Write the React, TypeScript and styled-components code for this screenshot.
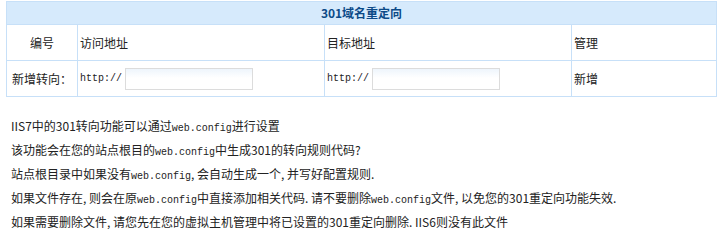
import React from 'react';
import styled, { createGlobalStyle } from 'styled-components';

const GlobalStyle = createGlobalStyle`
  html, body {
    margin: 0;
    padding: 0;
    background: #ffffff;
  }
  body {
    font-family: "Noto Sans CJK SC", "Noto Sans", sans-serif;
    font-size: 12px;
    color: #222222;
  }
`;

const Page = styled.div`
  width: 724px;
  height: 244px;
  padding-top: 1px;
  box-sizing: border-box;
`;

const RedirectTable = styled.table`
  margin-left: 6px;
  width: 710px;
  border-collapse: collapse;
  table-layout: fixed;
  border: 1px solid #c7e0f8;
`;

const TitleCell = styled.th`
  height: 22px;
  padding: 0;
  background: #d6eafc;
  border: 1px solid #c7e0f8;
  color: #0c4a88;
  font-size: 12px;
  font-weight: bold;
  text-align: center;
  line-height: 22px;
`;

const Cell = styled.td<{ $center?: boolean }>`
  height: 35px;
  padding: 0 0 0 ${(p) => (p.$center ? 0 : 2)}px;
  border: 1px solid #c7e0f8;
  text-align: ${(p) => (p.$center ? 'center' : 'left')};
  vertical-align: middle;
  font-size: 12px;
  line-height: 16px;
  color: #222222;
  white-space: nowrap;
`;

const Mono = styled.span`
  font-family: "Liberation Mono", "DejaVu Sans Mono", monospace;
  font-size: 10px;
  color: #222222;
`;

const UrlField = styled.div`
  display: flex;
  align-items: center;
  gap: 3px;
`;

const UrlInput = styled.input`
  width: 128px;
  height: 22px;
  box-sizing: border-box;
  margin: 0;
  padding: 0 3px;
  border: 1px solid #dcdcdc;
  background: linear-gradient(#eef5fc, #ffffff 45%);
  outline: none;
  font-size: 12px;
`;

const Notes = styled.div`
  margin-top: 17px;
  padding-left: 11px;
`;

const NoteLine = styled.p`
  margin: 0;
  height: 24px;
  line-height: 24px;
  font-size: 12px;
  color: #222222;
  white-space: nowrap;
`;

function UrlCell() {
  return (
    <Cell>
      <UrlField>
        <Mono>http://</Mono>
        <UrlInput type="text" />
      </UrlField>
    </Cell>
  );
}

export default function App() {
  return (
    <Page>
      <GlobalStyle />
      <RedirectTable>
        <colgroup>
          <col style={{ width: 71 }} />
          <col style={{ width: 247 }} />
          <col style={{ width: 247 }} />
          <col style={{ width: 145 }} />
        </colgroup>
        <thead>
          <tr>
            <TitleCell colSpan={4}>301域名重定向</TitleCell>
          </tr>
        </thead>
        <tbody>
          <tr>
            <Cell $center>编号</Cell>
            <Cell>访问地址</Cell>
            <Cell>目标地址</Cell>
            <Cell>管理</Cell>
          </tr>
          <tr>
            <Cell $center>新增转向：</Cell>
            <UrlCell />
            <UrlCell />
            <Cell>新增</Cell>
          </tr>
        </tbody>
      </RedirectTable>
      <Notes>
        <NoteLine>
          IIS7中的301转向功能可以通过<Mono>web.config</Mono>进行设置
        </NoteLine>
        <NoteLine>
          该功能会在您的站点根目的<Mono>web.config</Mono>中生成301的转向规则代码?
        </NoteLine>
        <NoteLine>
          站点根目录中如果没有<Mono>web.config</Mono>, 会自动生成一个, 并写好配置规则.
        </NoteLine>
        <NoteLine>
          如果文件存在, 则会在原<Mono>web.config</Mono>中直接添加相关代码. 请不要删除<Mono>web.config</Mono>文件, 以免您的301重定向功能失效.
        </NoteLine>
        <NoteLine>
          如果需要删除文件, 请您先在您的虚拟主机管理中将已设置的301重定向删除. IIS6则没有此文件
        </NoteLine>
      </Notes>
    </Page>
  );
}
